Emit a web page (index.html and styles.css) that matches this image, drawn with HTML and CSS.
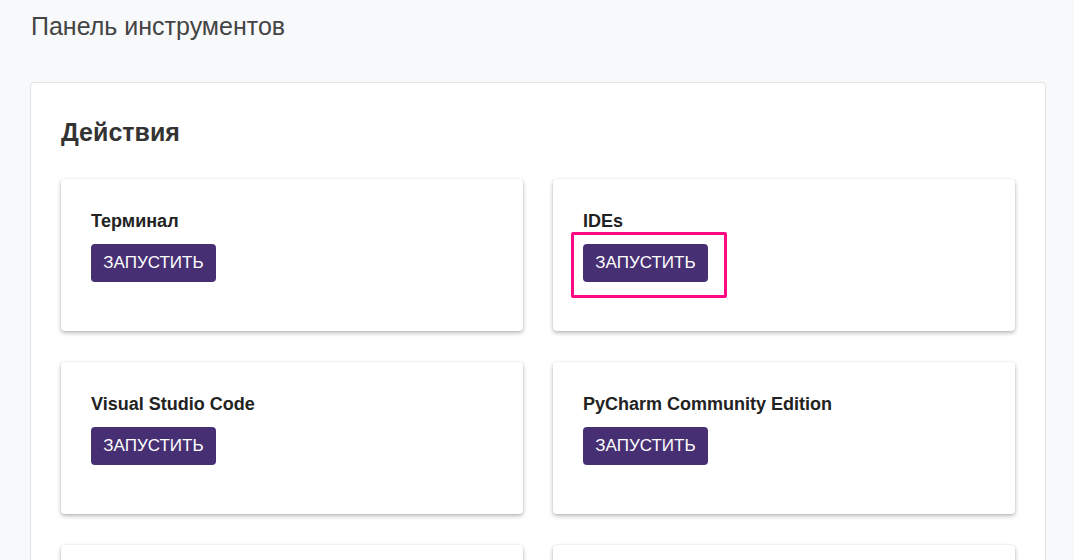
FILE: index.html
```html
<!DOCTYPE html>
<html lang="ru">
<head>
<meta charset="utf-8">
<title>Панель инструментов</title>
<link rel="stylesheet" href="styles.css">
</head>
<body>
<div class="page">
  <h1 class="page-title">Панель инструментов</h1>
  <section class="panel">
    <h2 class="panel-title">Действия</h2>
    <div class="grid">
      <div class="card">
        <div class="card-title">Терминал</div>
        <div class="actions"><button class="btn">ЗАПУСТИТЬ</button></div>
      </div>
      <div class="card">
        <div class="card-title">IDEs</div>
        <div class="actions"><button class="btn">ЗАПУСТИТЬ</button><span class="highlight"></span></div>
      </div>
      <div class="card">
        <div class="card-title">Visual Studio Code</div>
        <div class="actions"><button class="btn">ЗАПУСТИТЬ</button></div>
      </div>
      <div class="card">
        <div class="card-title">PyCharm Community Edition</div>
        <div class="actions"><button class="btn">ЗАПУСТИТЬ</button></div>
      </div>
      <div class="card">
        <div class="card-title">Jupyter</div>
        <div class="actions"><button class="btn">ЗАПУСТИТЬ</button></div>
      </div>
      <div class="card">
        <div class="card-title">RStudio</div>
        <div class="actions"><button class="btn">ЗАПУСТИТЬ</button></div>
      </div>
    </div>
  </section>
</div>
</body>
</html>
```

FILE: styles.css
```css
html, body {
  margin: 0;
  padding: 0;
  background: #f8f9fb;
  font-family: "Liberation Sans", Arial, sans-serif;
  color: #333;
}
.page {
  padding: 11px 28px 0 30px;
}
.page-title {
  margin: 0;
  font-size: 25px;
  font-weight: normal;
  color: #444;
  line-height: 30px;
  padding-left: 1px;
}
.panel {
  margin-top: 41px;
  background: #fff;
  border: 1px solid #e2e2e2;
  border-radius: 4px;
  padding: 34px 30px 30px 30px;
}
.panel-title {
  margin: 0 0 32px 0;
  font-size: 25px;
  font-weight: bold;
  color: #333;
  line-height: 30px;
}
.grid {
  display: grid;
  grid-template-columns: 1fr 1fr;
  column-gap: 30px;
  row-gap: 31px;
}
.card {
  background: #fff;
  border-radius: 4px;
  box-shadow: 0 2px 4px rgba(0,0,0,0.28), 0 0 2px rgba(0,0,0,0.08);
  padding: 31px 30px 0 30px;
  height: 152px;
  box-sizing: border-box;
}
.card-title {
  font-size: 18px;
  font-weight: bold;
  color: #222;
  line-height: 22px;
  margin-bottom: 12px;
}
.actions {
  position: relative;
  display: inline-block;
  vertical-align: top;
}
.btn {
  display: block;
  background: #472f73;
  color: #fff;
  border: none;
  border-radius: 4px;
  font-family: "Liberation Sans", Arial, sans-serif;
  font-size: 17px;
  height: 38px;
  width: 125px;
  padding: 0;
  cursor: pointer;
}
.highlight {
  position: absolute;
  left: -12px;
  top: -12px;
  width: 156px;
  height: 66px;
  box-sizing: border-box;
  border: 3px solid #ff0a83;
  border-radius: 2px;
}
```
